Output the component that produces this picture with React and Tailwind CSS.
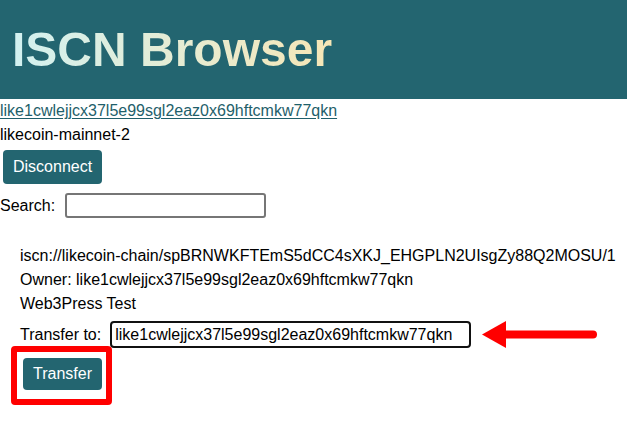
export default function App() {
  return (
    <div className="relative min-h-[427px] bg-white text-black text-[16px]" style={{ fontFamily: '"Liberation Sans", Arial, sans-serif' }}>
      <header className="h-[99px] bg-[#236570] flex items-center pl-3">
        <h1 className="text-[48px] font-bold leading-[55px] bg-gradient-to-r from-[#d2f1f1] to-[#f6e6b6] bg-clip-text text-transparent w-fit">
          ISCN Browser
        </h1>
      </header>
      <div className="leading-6">
        <a href="#" className="underline text-[#1f5f6b] underline-offset-2">like1cwlejjcx37l5e99sgl2eaz0x69hftcmkw77qkn</a>
      </div>
      <div className="leading-6">likecoin-mainnet-2</div>
      <button className="mt-[3px] ml-[3px] h-[34px] px-[10px] rounded-[4px] bg-[#236570] text-white leading-none">
        Disconnect
      </button>
      <div className="mt-[9px] flex items-center">
        <span>Search:</span>
        <input className="ml-[10px] w-[201px] h-[25px] border-2 border-[#767676] rounded-[3px] px-1 outline-none" />
      </div>
      <div className="mt-[26px] pl-5">
        <div className="leading-6 whitespace-nowrap">iscn://likecoin-chain/spBRNWKFTEmS5dCC4sXKJ_EHGPLN2UIsgZy88Q2MOSU/1</div>
        <div className="leading-6">Owner: like1cwlejjcx37l5e99sgl2eaz0x69hftcmkw77qkn</div>
        <div className="leading-6">Web3Press Test</div>
        <div className="mt-[5px] flex items-center">
          <span>Transfer to:</span>
          <input
            className="ml-[9px] w-[361px] h-[27px] border-2 border-[#111] rounded-[4px] px-[3px] outline-none text-black"
            defaultValue="like1cwlejjcx37l5e99sgl2eaz0x69hftcmkw77qkn"
          />
        </div>
        <button className="mt-[10px] ml-[3px] h-[32px] px-[10px] rounded-[4px] bg-[#236570] text-white leading-none">
          Transfer
        </button>
      </div>
      <div className="absolute left-[11px] top-[346px] w-[101px] h-[59px] border-[6px] border-[#ff0000] rounded-[4px]" />
      <svg className="absolute left-[480px] top-[320px]" width="120" height="30" viewBox="0 0 120 30">
        <line x1="22" y1="14.5" x2="113" y2="14.5" stroke="#ff0000" strokeWidth="8" strokeLinecap="round" />
        <polygon points="2,14.5 26,1 26,28" fill="#ff0000" />
      </svg>
    </div>
  );
}
